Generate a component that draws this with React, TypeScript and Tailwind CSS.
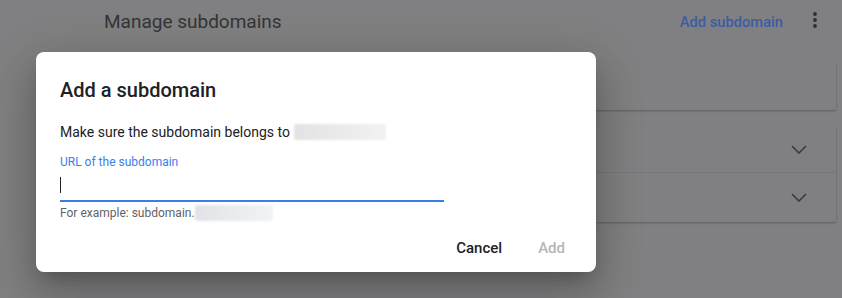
export default function App() {
  return (
    <div className="relative w-[842px] h-[298px] overflow-hidden bg-[#808082] font-['Roboto','Liberation_Sans',sans-serif]">
      {/* page behind the dialog (dimmed) */}
      <header className="flex items-center h-[44px] pl-[104px] pr-[15px]">
        <h1 className="text-[19px] text-[#333436]">Manage subdomains</h1>
        <div className="ml-auto flex items-center gap-5">
          <span className="text-[14.7px] font-medium text-[#3b5da3]">Add subdomain</span>
          <svg width="24" height="24" viewBox="0 0 24 24" fill="#2e2f31">
            <circle cx="12" cy="4" r="1.9" />
            <circle cx="12" cy="10" r="1.9" />
            <circle cx="12" cy="16" r="1.9" />
          </svg>
        </div>
      </header>

      <div className="ml-[96px] mr-[6px] mt-[18px]">
        <div className="h-[48px] bg-[#808082] shadow-[0_1px_2px_rgba(0,0,0,0.28)]" />
        <div className="mt-4 bg-[#808082] shadow-[0_1px_2px_rgba(0,0,0,0.28)]">
          <div className="h-[47px] flex items-center justify-end pr-[29px] border-b border-[#76777a]">
            <Chevron />
          </div>
          <div className="h-[49px] flex items-center justify-end pr-[29px]">
            <Chevron />
          </div>
        </div>
      </div>

      {/* dialog */}
      <div className="absolute left-[36px] top-[52px] w-[560px] h-[220px] rounded-[8px] bg-white flex flex-col pl-6 pr-[19px] pt-6 shadow-[0_11px_15px_-7px_rgba(0,0,0,0.2),0_24px_38px_3px_rgba(0,0,0,0.14),0_9px_46px_8px_rgba(0,0,0,0.12)]">
        <h2 className="text-[20px] leading-[28px] font-medium text-[#202124]">Add a subdomain</h2>
        <p className="mt-[18px] flex items-center text-[14px] leading-[20px] text-[#202124]">
          Make sure the subdomain belongs to
          <span className="ml-1 inline-block w-[92px] h-[16px] rounded-[2px] bg-gradient-to-r from-[#e3e3e5] to-[#f2f2f3] blur-[1px]" />
        </p>
        <label className="mt-3 text-[12px] leading-[16px] text-[#3b7ded]">URL of the subdomain</label>
        <div className="w-[384px] h-[32px] flex items-center border-b-2 border-[#3b7ded]">
          <span className="w-px h-[16px] bg-[#202124]" />
        </div>
        <p className="mt-[3px] flex items-center text-[12px] leading-[16px] text-[#5f6368]">
          For example: subdomain.
          <span className="inline-block w-[78px] h-[16px] rounded-[2px] bg-gradient-to-r from-[#e1e3e8] to-[#f2f3f5] blur-[1px]" />
        </p>
        <div className="mt-[9px] flex justify-end gap-3">
          <button className="h-9 px-3 text-[15px] font-medium text-[#202124]">Cancel</button>
          <button className="h-9 px-3 text-[15px] font-medium text-[#b4b6b9]" disabled>
            Add
          </button>
        </div>
      </div>
    </div>
  );
}

function Chevron() {
  return (
    <svg width="16" height="9" viewBox="0 0 16 9" fill="none" stroke="#3a3b3d" strokeWidth="1.6">
      <polyline points="1,1 8,8 15,1" />
    </svg>
  );
}
